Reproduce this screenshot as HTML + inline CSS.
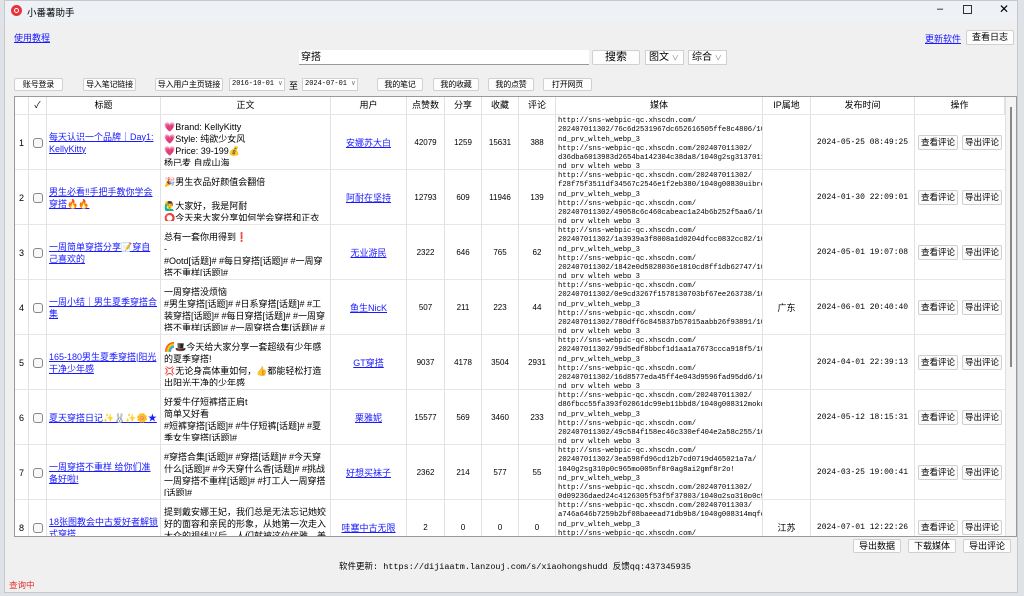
<!DOCTYPE html>
<html><head><meta charset="utf-8"><style>
*{box-sizing:border-box;margin:0;padding:0}
body{width:1024px;height:596px;overflow:hidden;background:#dfe3e8;font-family:"Liberation Sans","Noto Sans CJK SC",sans-serif;font-size:9px;color:#000;position:relative}
.win{position:absolute;left:4px;top:0;width:1014px;height:593px;background:#f0f0f0;border:1px solid #c8c8c8}
.title{position:absolute;left:0;top:0;width:100%;height:21px;background:#eef1f5}
.abs{position:absolute;white-space:nowrap}
.btn{position:absolute;background:#fdfdfd;border:1px solid #d0d0d0;border-radius:2px;font-size:9px;text-align:center;line-height:12px;white-space:nowrap;overflow:hidden}
.sb{font-size:8px;letter-spacing:-0.2px}
.sel{position:absolute;background:#fff;border:1px solid #d0d0d0;font-size:9px;line-height:13px;padding-left:3px;font-family:"Liberation Mono",monospace;white-space:nowrap;overflow:hidden}
a,.lk{color:#1a1aff;text-decoration:underline}
.tbl{position:absolute;left:9px;top:95px;width:1003px;height:441px;background:#fff;border:1px solid #999;overflow:hidden}
.hd{position:absolute;top:0;height:17px;font-size:9px;text-align:center;line-height:17px;border-right:1px solid #e2e2e2}
.row{position:absolute;left:0;width:990px;height:55px;border-top:1px solid #e6e6e6}
.c{position:absolute;top:0;height:55px;border-right:1px solid #e2e2e2;overflow:hidden}
.mid{display:flex;align-items:center;justify-content:center;height:100%;text-align:center}
.txt{padding:4px 3px;line-height:12px;font-size:9px;height:49px;overflow:hidden;margin-top:2px}
.med{font-family:"Liberation Mono","DejaVu Sans Mono",monospace;font-size:7.2px;line-height:9.3px;padding:2px 2px;white-space:pre;overflow:hidden;height:53px}
.cb{width:10px;height:10px;border:1px solid #888;border-radius:3px;background:#f8f8f8;margin:auto}
.ob{display:inline-block;border:1px solid #d0d0d0;border-radius:2px;background:#fbfbfb;padding:0 2px;line-height:13px;margin:0 2px;font-size:8.5px;white-space:nowrap}
</style></head><body>
<div class="win">
<div class="title">
 <div class="abs" style="left:6px;top:4px;width:11px;height:11px;border-radius:50%;background:#e8333b"><div style="margin:3px;width:5px;height:5px;border-radius:50%;border:1.2px solid #fff"></div></div>
 <div class="abs" style="left:22px;top:4px;font-size:9.5px">小番薯助手</div>
 <div class="abs" style="left:932px;top:2px;font-size:11px">–</div>
 <div class="abs" style="left:958px;top:4px;width:9px;height:9px;border:1px solid #333"></div>
 <div class="abs" style="left:994px;top:1px;font-size:12px">✕</div>
</div>
<div class="abs lk" style="left:9px;top:30px;font-size:9px">使用教程</div>
<div class="abs lk" style="left:920px;top:31px;font-size:9px">更新软件</div>
<div class="btn" style="left:961px;top:29px;width:48px;height:15px;line-height:13px">查看日志</div>
<div class="abs" style="left:294px;top:49px;width:290px;height:15px;background:#fff;border-bottom:1px solid #999;font-size:10px;padding-left:2px;line-height:15px">穿搭</div>
<div class="btn" style="left:587px;top:49px;width:48px;height:15px;font-size:11px;line-height:13px">搜索</div>
<div class="sel" style="left:640px;top:49px;width:39px;height:15px;font-family:inherit;font-size:10px">图文 <span style="font-size:7px;color:#777">∨</span></div>
<div class="sel" style="left:683px;top:49px;width:39px;height:15px;font-family:inherit;font-size:10px">综合 <span style="font-size:7px;color:#777">∨</span></div>
<div class="btn sb" style="left:9px;top:77px;width:49px;height:13px">账号登录</div>
<div class="btn sb" style="left:78px;top:77px;width:53px;height:13px">导入笔记链接</div>
<div class="btn sb" style="left:150px;top:77px;width:68px;height:13px">导入用户主页链接</div>
<div class="sel" style="left:224px;top:77px;width:56px;height:13px;font-size:7px;line-height:11px;padding-left:2px">2016-10-01 <span style="color:#777">∨</span></div>
<div class="abs" style="left:284px;top:78px;font-size:9px">至</div>
<div class="sel" style="left:297px;top:77px;width:56px;height:13px;font-size:7px;line-height:11px;padding-left:2px">2024-07-01 <span style="color:#777">∨</span></div>
<div class="btn sb" style="left:372px;top:77px;width:46px;height:13px">我的笔记</div>
<div class="btn sb" style="left:428px;top:77px;width:46px;height:13px">我的收藏</div>
<div class="btn sb" style="left:483px;top:77px;width:46px;height:13px">我的点赞</div>
<div class="btn sb" style="left:538px;top:77px;width:49px;height:13px">打开网页</div>

<div class="tbl">
 <div class="hd" style="left:0;width:14px"></div>
 <div class="hd" style="left:14px;width:18px">✓</div>
 <div class="hd" style="left:32px;width:114px">标题</div>
 <div class="hd" style="left:146px;width:170px">正文</div>
 <div class="hd" style="left:316px;width:76px">用户</div>
 <div class="hd" style="left:392px;width:38px">点赞数</div>
 <div class="hd" style="left:430px;width:37px">分享</div>
 <div class="hd" style="left:467px;width:37px">收藏</div>
 <div class="hd" style="left:504px;width:37px">评论</div>
 <div class="hd" style="left:541px;width:207px">媒体</div>
 <div class="hd" style="left:748px;width:48px">IP属地</div>
 <div class="hd" style="left:796px;width:104px">发布时间</div>
 <div class="hd" style="left:900px;width:90px">操作</div>
 <div class="abs" style="left:990px;top:0;width:13px;height:441px;background:#f4f4f4;border-left:1px solid #e0e0e0"><div style="margin:10px 4px;width:2px;height:260px;background:#888"></div></div>
 <div id="rows"></div>
</div>

<div class="btn" style="left:848px;top:538px;width:48px;height:14px">导出数据</div>
<div class="btn" style="left:903px;top:538px;width:48px;height:14px">下载媒体</div>
<div class="btn" style="left:958px;top:538px;width:48px;height:14px">导出评论</div>
<div class="abs" style="left:334px;top:559px;font-size:8.5px;font-family:'Liberation Mono','Noto Sans CJK SC',monospace">软件更新: https://dijiaatm.lanzouj.com/s/xiaohongshudd  反馈qq:437345935</div>
<div class="abs" style="left:4px;top:578px;font-size:8.5px;color:#e53030">查询中</div>
</div>
<script>
var d=[
["每天认识一个品牌｜Day1: KellyKitty","💗Brand:  KellyKitty<br>💗Style:  纯欲少女风<br>💗Price:  39-199💰<br>杨已麦 自成山海","安娜苏大白","42079","1259","15631","388","http://sns-webpic-qc.xhscdn.com/\n202407011302/76c6d2531967dc652616505ffe8c4806/1040\nnd_prv_wlteh_webp_3\nhttp://sns-webpic-qc.xhscdn.com/202407011302/\nd36dba6013983d2654ba142304c38da8/1040g2sg3137011ru\nnd_prv_wlteh_webp_3","","2024-05-25 08:49:25"],
["男生必看‼手把手教你学会穿搭🔥🔥","🎉男生衣品好颜值会翻倍<br><br>🙋‍♂️大家好，我是阿耐<br>⭕今天来大家分享如何学会穿搭和正衣服","阿耐在坚持","12793","609","11946","139","http://sns-webpic-qc.xhscdn.com/202407011302/\nf28f75f3511df34567c2546e1f2eb380/1040g00830uibrc06\nnd_prv_wlteh_webp_3\nhttp://sns-webpic-qc.xhscdn.com/\n202407011302/49058c6c460cabeac1a24b6b252f5aa6/1040\nnd_prv_wlteh_webp_3","","2024-01-30 22:09:01"],
["一周简单穿搭分享📝穿自己喜欢的","总有一套你用得到❗<br>-<br>#Ootd[话题]# #每日穿搭[话题]# #一周穿搭不重样[话题]#","无业游民","2322","646","765","62","http://sns-webpic-qc.xhscdn.com/\n202407011302/1a3939a3f8008a1d0204dfcc0832cc82/1040\nnd_prv_wlteh_webp_3\nhttp://sns-webpic-qc.xhscdn.com/\n202407011302/1842e0d5828036e1810cd8ff1db62747/1040\nnd_prv_wlteh_webp_3","","2024-05-01 19:07:08"],
["一周小结｜男生夏季穿搭合集","一周穿搭没烦恼<br>#男生穿搭[话题]# #日系穿搭[话题]# #工装穿搭[话题]# #每日穿搭[话题]# #一周穿搭不重样[话题]# #一周穿搭合集[话题]# #夏季穿搭[话题]#","鱼生NicK","507","211","223","44","http://sns-webpic-qc.xhscdn.com/\n202407011302/0e9cd3267f1578130703bf67ee263738/1040\nnd_prv_wlteh_webp_3\nhttp://sns-webpic-qc.xhscdn.com/\n202407011302/780dff6c845837b57015aabb26f93891/1040\nnd_prv_wlteh_webp_3","广东","2024-06-01 20:40:40"],
["165-180男生夏季穿搭|阳光干净少年感","🌈🎩今天给大家分享一套超级有少年感的夏季穿搭!<br>💢无论身高体重如何，👍都能轻松打造出阳光干净的少年感","GT穿搭","9037","4178","3504","2931","http://sns-webpic-qc.xhscdn.com/\n202407011302/99d5edf8bbcf1d1aa1a7673ccca918f5/1040\nnd_prv_wlteh_webp_3\nhttp://sns-webpic-qc.xhscdn.com/\n202407011302/16d8577eda45ff4e043d9596fad95dd6/1040\nnd_prv_wlteh_webp_3","","2024-04-01 22:39:13"],
["夏天穿搭日记✨🐰✨🌼★","好爱牛仔短裤搭正肩t<br>简单又好看<br>#短裤穿搭[话题]# #牛仔短裤[话题]# #夏季女生穿搭[话题]#","栗雅妮","15577","569","3460","233","http://sns-webpic-qc.xhscdn.com/202407011302/\nd86fbcc55fa393f02061dc99eb11bbd8/1040g008312mokncO\nnd_prv_wlteh_webp_3\nhttp://sns-webpic-qc.xhscdn.com/\n202407011302/49c584f158ec46c330ef404e2a58c255/1040\nnd_prv_wlteh_webp_3","","2024-05-12 18:15:31"],
["一周穿搭不重样 给你们准备好啦!","#穿搭合集[话题]# #穿搭[话题]# #今天穿什么[话题]# #今天穿什么香[话题]# #挑战一周穿搭不重样[话题]# #打工人一周穿搭[话题]#","好想买袜子","2362","214","577","55","http://sns-webpic-qc.xhscdn.com/\n202407011302/3ea598fd96cd12b7cd0719d465021a7a/\n1040g2sg310p0c965mo005nf8r0ag8ai2gmf8r2o!\nnd_prv_wlteh_webp_3\nhttp://sns-webpic-qc.xhscdn.com/202407011302/\n0d09236daed24c4126305f53f5f37803/1040g2sg310p0c965","","2024-03-25 19:00:41"],
["18张图教会中古爱好者解锁式穿搭","提到戴安娜王妃，我们总是无法忘记她姣好的面容和亲民的形象，从她第一次走入大众的视线以后，人们就被这位优雅，美丽的王妃深深吸引着。戴安娜的出现不仅深深的抓住了英国","哇塞中古无限","2","0","0","0","http://sns-webpic-qc.xhscdn.com/202407011303/\na746a646b7259b2bf08baeead71db9b8/1040g008314mqfd43\nnd_prv_wlteh_webp_3\nhttp://sns-webpic-qc.xhscdn.com/","江苏","2024-07-01 12:22:26"]];
var h="";
d.forEach(function(r,i){
h+='<div class="row" style="top:'+(17+55*i)+'px">'+
'<div class="c" style="left:0;width:14px"><div class="mid">'+(i+1)+'</div></div>'+
'<div class="c" style="left:14px;width:18px"><div class="mid"><div class="cb"></div></div></div>'+
'<div class="c" style="left:32px;width:114px"><div class="mid" style="justify-content:flex-start;text-align:left;padding:0 2px;line-height:12px"><span class="lk">'+r[0]+'</span></div></div>'+
'<div class="c" style="left:146px;width:170px"><div class="txt">'+r[1]+'</div></div>'+
'<div class="c" style="left:316px;width:76px"><div class="mid"><span class="lk">'+r[2]+'</span></div></div>'+
'<div class="c" style="left:392px;width:38px;font-size:8px"><div class="mid">'+r[3]+'</div></div>'+
'<div class="c" style="left:430px;width:37px;font-size:8px"><div class="mid">'+r[4]+'</div></div>'+
'<div class="c" style="left:467px;width:37px;font-size:8px"><div class="mid">'+r[5]+'</div></div>'+
'<div class="c" style="left:504px;width:37px;font-size:8px"><div class="mid">'+r[6]+'</div></div>'+
'<div class="c" style="left:541px;width:207px"><div class="med">'+r[7]+'</div></div>'+
'<div class="c" style="left:748px;width:48px"><div class="mid">'+r[8]+'</div></div>'+
'<div class="c" style="left:796px;width:104px;font-size:8px;font-family:\'Liberation Mono\',monospace"><div class="mid">'+r[9]+'</div></div>'+
'<div class="c" style="left:900px;width:90px;border-right:none"><div class="mid"><span class="ob">查看评论</span><span class="ob">导出评论</span></div></div>'+
'</div>';});
document.getElementById("rows").innerHTML=h;
</script>
</body></html>
